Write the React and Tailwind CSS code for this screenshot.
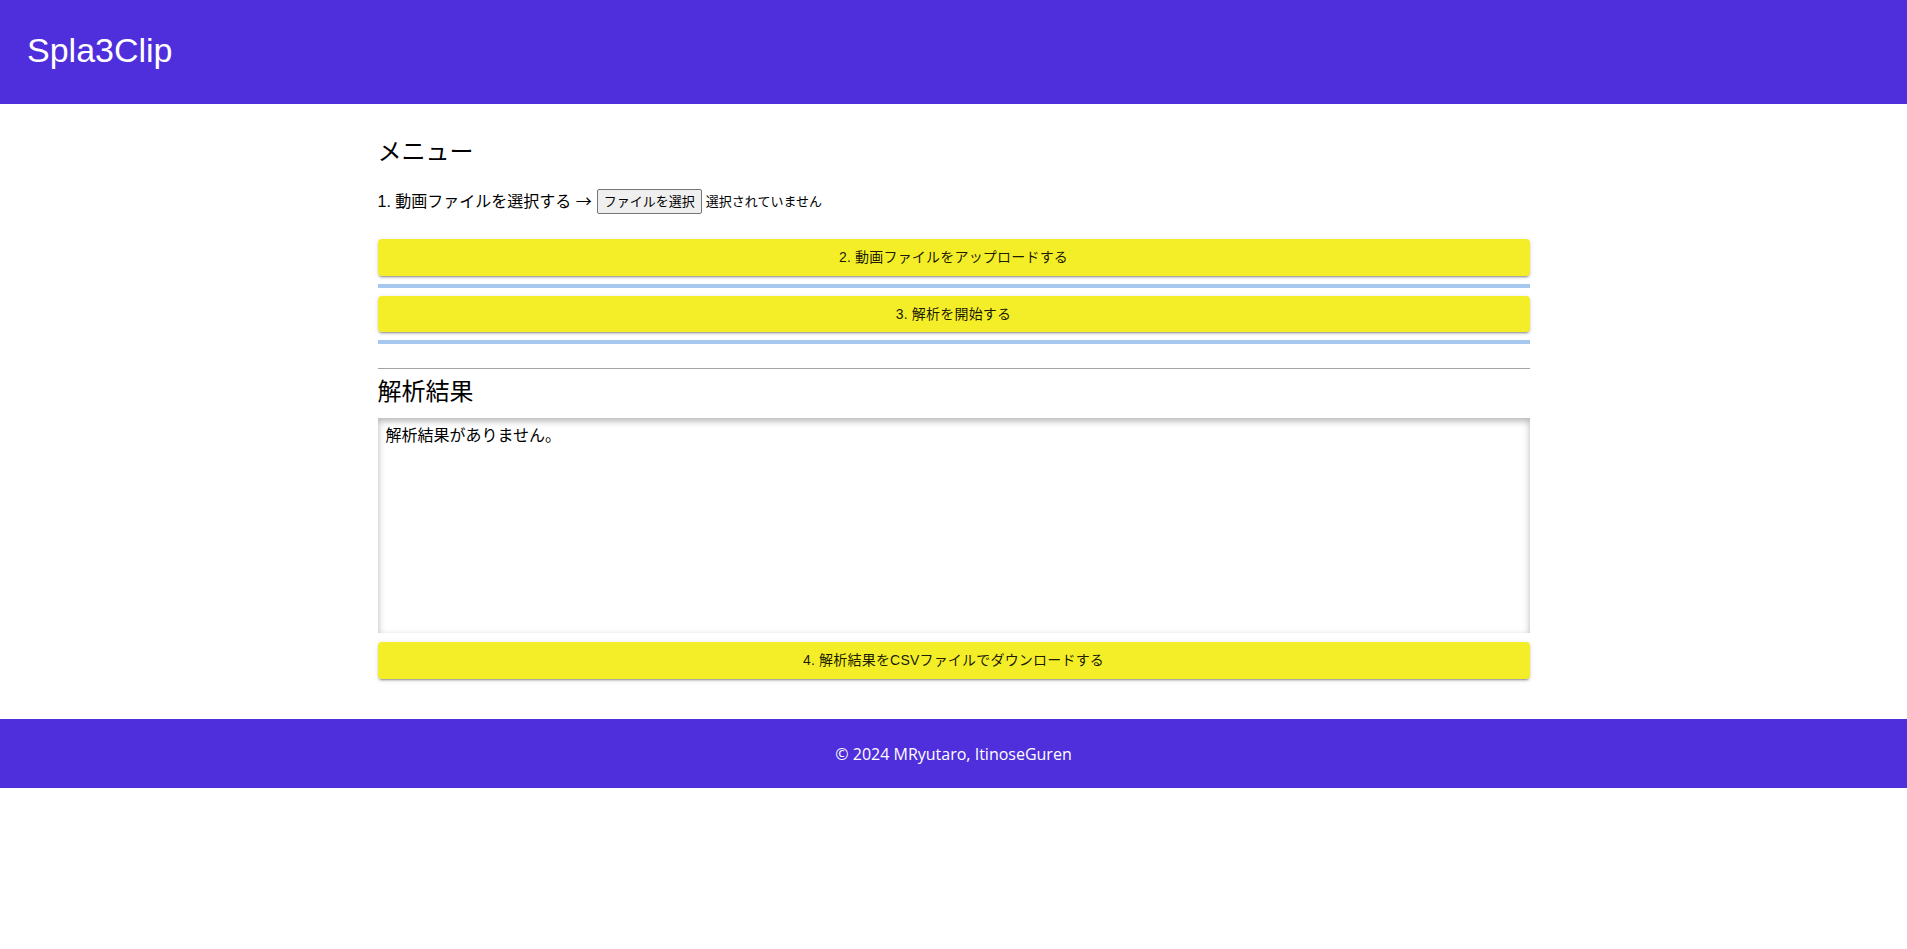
import { useState } from 'react';

const jp = '"Liberation Sans", "Noto Sans CJK JP", sans-serif';

function ActionButton({ children, className = '' }) {
  return (
    <button
      type="button"
      className={`w-full rounded-[4px] bg-[#f3ee27] text-[14px] tracking-[0.2px] text-black/90 shadow-[0_3px_1px_-2px_rgba(0,0,0,0.2),0_2px_2px_0_rgba(0,0,0,0.14),0_1px_5px_0_rgba(0,0,0,0.12)] ${className}`}
      style={{ fontFamily: jp }}
    >
      {children}
    </button>
  );
}

function Progress() {
  return <div className="mt-2 h-1 w-full bg-[#a7c8ee]" />;
}

export default function App() {
  const [result] = useState('解析結果がありません。');

  return (
    <div className="min-h-[949px] bg-white" style={{ fontFamily: jp }}>
      {/* Header */}
      <header className="flex h-[104px] items-center bg-[#4f2edc] px-[27px]">
        <h1
          className="pb-1 text-[34px] leading-none text-white"
          style={{ fontFamily: '"Liberation Sans", Arial, sans-serif' }}
        >
          Spla3Clip
        </h1>
      </header>

      {/* Main */}
      <main className="mx-auto max-w-[1152px] pt-[32px] text-black">
        <h2 className="text-[24px] leading-[32px]">メニュー</h2>

        <div className="mt-[21px] flex h-[25px] items-center text-[16px]">
          <span className="-mt-[1px]">
            1. 動画ファイルを選択する <span style={{ fontFamily: '"Noto Sans CJK JP", sans-serif' }}>→</span>
          </span>
          <span className="ml-[5px] flex h-[25px] items-center rounded-[2px] border border-[#767676] bg-[#efefef] px-[6px] text-[13px]">
            ファイルを選択
          </span>
          <span className="ml-[4px] text-[13px]">選択されていません</span>
        </div>

        <ActionButton className="mt-[25px] h-[37px]">2. 動画ファイルをアップロードする</ActionButton>
        <Progress />
        <ActionButton className="mt-2 h-[36px]">3. 解析を開始する</ActionButton>
        <Progress />

        <div className="mt-6 border-t border-[#a3a3a3]" />

        <h2 className="mt-[7px] text-[24px] leading-[32px]">解析結果</h2>

        <div className="mt-[10px] h-[215px] bg-white px-2 pt-[6px] text-[16px] leading-6 shadow-[inset_0_3px_7px_rgba(0,0,0,0.3)]">
          {result}
        </div>

        <ActionButton className="mt-[9px] h-[37px]">4. 解析結果をCSVファイルでダウンロードする</ActionButton>
      </main>

      {/* Footer */}
      <footer
        className="mt-10 flex h-[69px] items-center justify-center bg-[#4f2edc] text-[16px] text-white"
        style={{ fontFamily: '"Open Sans", "Noto Sans", sans-serif' }}
      >
        © 2024 MRyutaro, ItinoseGuren
      </footer>
    </div>
  );
}
